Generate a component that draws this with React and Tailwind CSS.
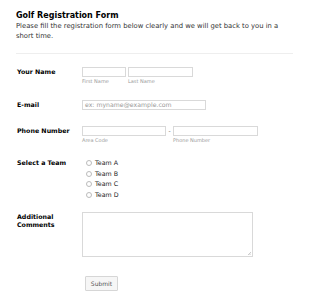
export default function App() {
  const font = { fontFamily: '"DejaVu Sans", Verdana, sans-serif' };
  const input = "block h-[10px] border border-[#d9d9d9] bg-white";
  const sub = "mt-[1px] text-[5px] leading-[6px] text-[#9a9a9a]";
  const label = "w-[66px] shrink-0 pl-[1px] text-[6.3px] font-bold leading-[8px] text-black";
  return (
    <div className="min-h-[302px] w-[310px] bg-white pl-[16px] pr-[17px] pt-[10px]" style={font}>
      {/* Header */}
      <h1 className="text-[8px] font-bold leading-[11px] text-black">Golf Registration Form</h1>
      <p className="text-[6.8px] leading-[10px] text-[#333]">
        Please fill the registration form below clearly and we will get back to you in a short time.
      </p>
      <div className="mt-[12px] h-px bg-[#eeeeee]" />

      {/* Your Name */}
      <div className="mt-[13px] flex">
        <div className={label + " pt-[1px]"}>Your Name</div>
        <div className="flex gap-[2px]">
          <div>
            <div className={input + " w-[44px]"} />
            <div className={sub}>First Name</div>
          </div>
          <div>
            <div className={input + " w-[65px]"} />
            <div className={sub}>Last Name</div>
          </div>
        </div>
      </div>

      {/* E-mail */}
      <div className="mt-[16px] flex">
        <div className={label + " pt-[1px]"}>E-mail</div>
        <div className="flex h-[10px] w-[124px] items-center border border-[#d9d9d9] px-[2px] text-[6.2px] text-[#9a9a9a]">
          ex: myname@example.com
        </div>
      </div>

      {/* Phone */}
      <div className="mt-[16px] flex">
        <div className={label + " pt-[1px]"}>Phone Number</div>
        <div className="flex">
          <div>
            <div className={input + " w-[84px]"} />
            <div className={sub}>Area Code</div>
          </div>
          <div className="w-[7px] text-center text-[6px] leading-[10px] text-[#666]">-</div>
          <div>
            <div className={input + " w-[85px]"} />
            <div className={sub}>Phone Number</div>
          </div>
        </div>
      </div>

      {/* Team */}
      <div className="mt-[15px] flex">
        <div className={label + " pt-[1px]"}>Select a Team</div>
        <div className="flex flex-col pl-[4px]">
          {["Team A", "Team B", "Team C", "Team D"].map((t) => (
            <div key={t} className="flex h-[10.5px] items-center gap-[3px]">
              <span className="h-[6px] w-[6px] rounded-full border border-[#bbbbbb] bg-white" />
              <span className="text-[6.3px] leading-[8px] text-[#222]">{t}</span>
            </div>
          ))}
        </div>
      </div>

      {/* Comments */}
      <div className="mt-[12px] flex">
        <div className={label + " pt-[1px] leading-[7.5px]"}>
          Additional
          <br />
          Comments
        </div>
        <div className="relative h-[45px] w-[171px] border border-[#d9d9d9]">
          <svg className="absolute bottom-[1px] right-[1px]" width="4" height="4" viewBox="0 0 4 4">
            <path d="M1 4L4 1M2.5 4L4 2.5" stroke="#aaa" strokeWidth="0.6" />
          </svg>
        </div>
      </div>

      {/* Submit */}
      <div className="mt-[19px] pl-[69px]">
        <button className="block h-[15px] w-[33px] rounded-[1px] border border-[#d6d6d6] bg-[#f6f6f6] text-[6px] leading-[13px] text-[#555]">
          Submit
        </button>
      </div>
    </div>
  );
}
